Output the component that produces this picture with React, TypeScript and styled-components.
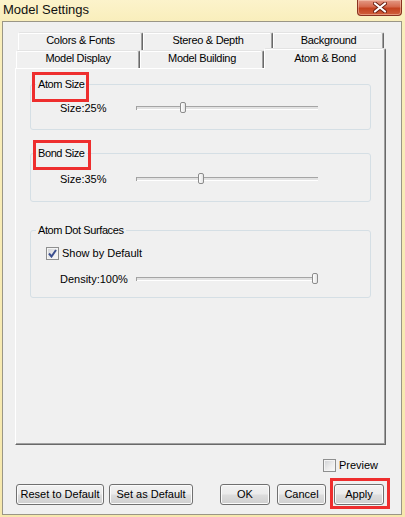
import React from "react";
import styled, { createGlobalStyle } from "styled-components";

const Global = createGlobalStyle`
  html, body { margin: 0; padding: 0; }
  body {
    font-family: "Liberation Sans", Arial, sans-serif;
    font-size: 11px;
    color: #000;
    background: #fff;
  }
`;

const Window = styled.div`
  width: 405px;
  height: 517px;
  box-sizing: border-box;
  padding: 0 3px 2px 2px;
  display: flex;
  flex-direction: column;
  background: linear-gradient(#fcf3cb 0px, #f9eebb 22px, #f6e8ad 100%);
`;

const TitleBar = styled.div`
  height: 21px;
  flex: none;
  display: flex;
  justify-content: space-between;
  align-items: flex-start;
`;

const Title = styled.div`
  padding-left: 1px;
  line-height: 20px;
  font-size: 13px;
  color: #101010;
`;

const CloseButton = styled.div`
  width: 45px;
  height: 16px;
  box-sizing: border-box;
  border: 1px solid #8a3220;
  border-top: none;
  border-radius: 0 0 4px 4px;
  background: linear-gradient(#e49a86 0%, #d5694d 45%, #c4421f 55%, #d0603c 100%);
  box-shadow: inset 0 0 0 1px rgba(255, 220, 200, 0.45);
  display: flex;
  align-items: center;
  justify-content: center;
`;

const Client = styled.div`
  flex: 1;
  box-sizing: border-box;
  border: 1px solid #9a9686;
  background: #f0f0f0;
  padding: 10px 14px 0 12px;
  display: flex;
  flex-direction: column;
`;

const TabStrip = styled.div`
  width: 371px;
  display: flex;
  flex-direction: column;
`;

const TabRow = styled.div<{ $indent: number }>`
  height: 18px;
  display: flex;
  align-items: flex-end;
  padding-left: ${(p) => p.$indent}px;
`;

const Tab = styled.div<{ $w: number; $active?: boolean }>`
  width: ${(p) => p.$w}px;
  height: ${(p) => (p.$active ? 21 : 18)}px;
  margin-bottom: ${(p) => (p.$active ? -1 : 0)}px;
  box-sizing: border-box;
  flex: none;
  position: ${(p) => (p.$active ? "relative" : "static")};
  z-index: ${(p) => (p.$active ? 1 : 0)};
  background: #f0f0f0;
  border-top: 1px solid #e3e3e3;
  border-left: 1px solid #fff;
  border-right: 1px solid #696969;
  border-radius: 2px 2px 0 0;
  box-shadow: inset -1px 0 #a0a0a0, inset 0 1px #fff;
  text-align: center;
  line-height: 14px;
  letter-spacing: -0.3px;
  padding-top: ${(p) => (p.$active ? 2 : 0)}px;
  white-space: nowrap;
`;

const Panel = styled.div`
  width: 371px;
  height: 377px;
  flex: none;
  box-sizing: border-box;
  border-top: 1px solid #fff;
  border-left: 1px solid #fff;
  border-right: 1px solid #696969;
  border-bottom: 1px solid #696969;
  box-shadow: inset -1px -1px #a0a0a0;
  background: #f0f0f0;
  padding: 9px 0 0 14px;
`;

const Group = styled.fieldset<{ $mt: number; $pt: number; $pb: number }>`
  width: 341px;
  box-sizing: border-box;
  margin: ${(p) => p.$mt}px 0 0 0;
  padding: ${(p) => p.$pt}px 0 ${(p) => p.$pb}px 0;
  border: 1px solid #d5dfe5;
  border-radius: 3px;
  min-width: 0;
`;

const Legend = styled.legend`
  margin-left: 5px;
  padding: 0 2px;
  line-height: 13px;
  letter-spacing: -0.4px;
  position: relative;
`;

const RedBox = styled.span<{ $l: number; $t: number; $w: number; $h: number }>`
  position: absolute;
  left: ${(p) => p.$l}px;
  top: ${(p) => p.$t}px;
  width: ${(p) => p.$w}px;
  height: ${(p) => p.$h}px;
  box-sizing: border-box;
  border: 3px solid #ee2e2e;
  pointer-events: none;
`;

const SliderRow = styled.div`
  display: grid;
  grid-template-columns: 76px 182px;
  align-items: center;
  height: 16px;
  padding-left: 29px;
`;

const SliderLabel = styled.div`
  white-space: nowrap;
  line-height: 14px;
`;

const Track = styled.div`
  position: relative;
  height: 4px;
  background: linear-gradient(#a5a5a5 0 1px, #e2e2e2 1px 3px, #ffffff 3px 4px);
  box-shadow: inset 1px 0 #a0a0a0;
`;

const Thumb = styled.div`
  position: absolute;
  top: -4px;
  width: 6px;
  height: 11px;
  box-sizing: border-box;
  border: 1px solid #8c8c8c;
  border-radius: 2px;
  background: linear-gradient(90deg, #ffffff, #e4e4e4);
`;

const CheckRow = styled.label<{ $indent: number }>`
  display: flex;
  align-items: center;
  gap: 3px;
  height: 14px;
  padding-left: ${(p) => p.$indent}px;
  line-height: 14px;
  white-space: nowrap;
`;

const Box = styled.span`
  width: 13px;
  height: 13px;
  box-sizing: border-box;
  flex: none;
  border: 1px solid #8e8f8f;
  background: linear-gradient(135deg, #cfd1d4 0%, #eeeeee 60%, #fafafa 100%);
  box-shadow: inset 0 0 0 1px #f4f4f4;
  display: flex;
  align-items: center;
  justify-content: center;
`;

const Spacer = styled.div<{ $h: number }>`
  height: ${(p) => p.$h}px;
  flex: none;
`;

const PreviewRow = styled.div`
  display: flex;
  justify-content: flex-end;
  margin-top: 13px;
  padding-right: 9px;
`;

const ButtonRow = styled.div`
  display: flex;
  margin-top: 12px;
  padding-left: 1px;
  height: 21px;
`;

const Annotated = styled.span<{ $ml: number }>`
  position: relative;
  display: inline-flex;
  margin-left: ${(p) => p.$ml}px;
`;

const Button = styled.button<{ $w: number; $ml?: number }>`
  width: ${(p) => p.$w}px;
  height: 21px;
  margin: 0 0 0 ${(p) => p.$ml ?? 0}px;
  padding: 0;
  box-sizing: border-box;
  border: 1px solid #707070;
  border-radius: 3px;
  background: linear-gradient(#f2f2f2 0%, #ebebeb 48%, #dddddd 52%, #cfcfcf 100%);
  box-shadow: inset 0 0 0 1px #fbfbfb;
  font-family: "Liberation Sans", Arial, sans-serif;
  font-size: 11px;
  color: #000;
  white-space: nowrap;
  line-height: 19px;
`;

const Check = () => (
  <svg width="9" height="9" viewBox="0 0 9 9">
    <path d="M1 4.5 L3.5 7.5 L8 1" fill="none" stroke="#3b4f8f" strokeWidth="2" />
  </svg>
);

const CheckBox: React.FC<{ checked?: boolean }> = ({ checked }) => (
  <Box>{checked ? <Check /> : null}</Box>
);

const Slider: React.FC<{ label: string; value: number }> = ({ label, value }) => (
  <SliderRow>
    <SliderLabel>{label}</SliderLabel>
    <Track>
      <Thumb style={{ left: Math.round((value / 100) * 176) }} />
    </Track>
  </SliderRow>
);

const CloseGlyph = () => (
  <svg width="14" height="11" viewBox="0 0 14 11">
    <path d="M2 1.5 L12 9.5 M12 1.5 L2 9.5" stroke="#6b1f10" strokeWidth="4" strokeLinecap="round" />
    <path d="M2 1.5 L12 9.5 M12 1.5 L2 9.5" stroke="#ffffff" strokeWidth="2.2" strokeLinecap="round" />
  </svg>
);

export default function App() {
  return (
    <>
      <Global />
      <Window>
        <TitleBar>
          <Title>Model Settings</Title>
          <CloseButton>
            <CloseGlyph />
          </CloseButton>
        </TitleBar>
        <Client>
          <TabStrip>
            <TabRow $indent={3}>
              <Tab $w={125}>Colors &amp; Fonts</Tab>
              <Tab $w={130}>Stereo &amp; Depth</Tab>
              <Tab $w={111}>Background</Tab>
            </TabRow>
            <TabRow $indent={1}>
              <Tab $w={124}>Model Display</Tab>
              <Tab $w={124}>Model Building</Tab>
              <Tab $w={122} $active>
                Atom &amp; Bond
              </Tab>
            </TabRow>
          </TabStrip>
          <Panel>
            <Group $mt={0} $pt={9} $pb={13}>
              <Legend>
                Atom Size
                <RedBox $l={-4} $t={-6} $w={57} $h={30} />
              </Legend>
              <Slider label="Size:25%" value={25} />
            </Group>
            <Group $mt={17} $pt={11} $pb={14}>
              <Legend>
                Bond Size
                <RedBox $l={-3} $t={-7} $w={58} $h={30} />
              </Legend>
              <Slider label="Size:35%" value={35} />
            </Group>
            <Group $mt={22} $pt={9} $pb={10}>
              <Legend>Atom Dot Surfaces</Legend>
              <CheckRow $indent={15}>
                <CheckBox checked />
                Show by Default
              </CheckRow>
              <Spacer $h={11} />
              <Slider label="Density:100%" value={100} />
            </Group>
          </Panel>
          <PreviewRow>
            <CheckRow $indent={0}>
              <CheckBox />
              Preview
            </CheckRow>
          </PreviewRow>
          <ButtonRow>
            <Button $w={88}>Reset to Default</Button>
            <Button $w={84} $ml={5}>
              Set as Default
            </Button>
            <Button $w={50} $ml={27}>
              OK
            </Button>
            <Button $w={49} $ml={7}>
              Cancel
            </Button>
            <Annotated $ml={8}>
              <Button $w={50}>Apply</Button>
              <RedBox $l={-4} $t={-6} $w={60} $h={31} />
            </Annotated>
          </ButtonRow>
        </Client>
      </Window>
    </>
  );
}
